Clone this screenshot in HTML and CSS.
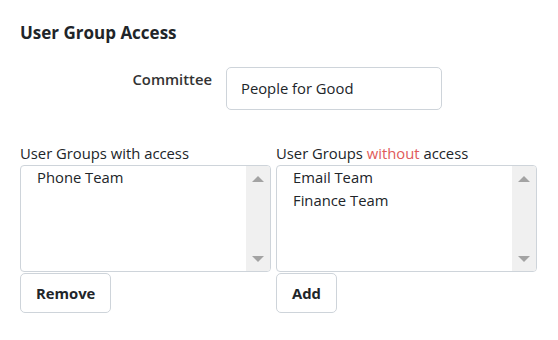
FILE: index.html
```html
<!DOCTYPE html>
<html lang="en">
<head>
    <meta charset="UTF-8">
    <meta name="viewport" content="width=device-width, initial-scale=1.0">
    <title>User Group Access</title>
    <link rel="stylesheet" href="styles.css">
</head>
<body>
    <div class="panel">
        <h3 class="title">User Group Access</h3>

        <div class="committee-row">
            <label class="committee-label">Committee</label>
            <div class="committee-input">People for Good</div>
        </div>

        <div class="groups">
            <div class="group left">
                <p class="group-label">User Groups with access</p>
                <div class="listbox">
                    <div class="items">
                        <div class="item">Phone Team</div>
                    </div>
                    <div class="scrollbar">
                        <span class="arrow up"></span>
                        <span class="arrow down"></span>
                    </div>
                </div>
                <button class="btn">Remove</button>
            </div>
            <div class="group right">
                <p class="group-label">User Groups <span class="no">without</span> access</p>
                <div class="listbox">
                    <div class="items">
                        <div class="item">Email Team</div>
                        <div class="item">Finance Team</div>
                    </div>
                    <div class="scrollbar">
                        <span class="arrow up"></span>
                        <span class="arrow down"></span>
                    </div>
                </div>
                <button class="btn">Add</button>
            </div>
        </div>
    </div>
</body>
</html>
```

FILE: styles.css
```css
body {
    font-family: "Open Sans", "Noto Sans", Arial, sans-serif;
    font-size: 14.8px;
    color: #212529;
    background-color: #fff;
    margin: 0;
    padding: 0;
}

.panel {
    padding: 20px 20px 0 20px;
}

.title {
    margin: 0;
    font-size: 17px;
    font-weight: 700;
    line-height: 26px;
}

.committee-row {
    display: flex;
    margin-top: 21px;
}

.committee-label {
    width: 192px;
    text-align: right;
    padding-top: 1px;
    padding-right: 14px;
    font-weight: 600;
    color: #333;
    line-height: 22px;
}

.committee-input {
    width: 200px;
    height: 41px;
    line-height: 41px;
    padding-left: 14px;
    border: 1px solid #ced4da;
    border-radius: 5px;
}

.groups {
    display: flex;
    margin-top: 33px;
}

.group.left {
    width: 256px;
}

.group.right {
    width: 261px;
}

.group-label {
    margin: 0 0 2px 0;
    line-height: 20px;
}

.no {
    color: #e05a5a;
}

.listbox {
    display: flex;
    height: 105px;
    border: 1px solid #ced4da;
    border-radius: 4px;
    overflow: hidden;
}

.group.left .listbox {
    width: 249px;
}

.items {
    flex: 1;
    padding: 0 0 0 16px;
}

.item {
    line-height: 23px;
}

.scrollbar {
    width: 24px;
    background-color: #f0f0f0;
    display: flex;
    flex-direction: column;
    justify-content: space-between;
    align-items: center;
    padding: 10px 0 9px 0;
}

.arrow {
    width: 0;
    height: 0;
    border-left: 6px solid transparent;
    border-right: 6px solid transparent;
}

.arrow.up {
    border-bottom: 6px solid #a3a3a3;
}

.arrow.down {
    border-top: 6px solid #a3a3a3;
}

.btn {
    margin-top: 1px;
    height: 40px;
    padding: 0 15px;
    font-family: inherit;
    font-size: 14.8px;
    font-weight: 700;
    color: #212529;
    background-color: #fff;
    border: 1px solid #ced4da;
    border-radius: 5px;
}
```
